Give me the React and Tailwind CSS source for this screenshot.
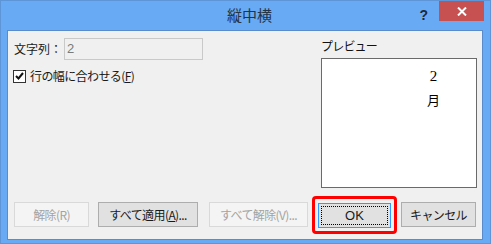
import React from 'react';

const jp = { fontFamily: '"Noto Sans CJK JP", "Noto Sans", sans-serif' };

function Btn({ children, disabled, className = '' }) {
  return (
    <button
      disabled={disabled}
      className={`h-[25px] border text-[12px] leading-none tracking-[-0.6px] flex items-center justify-center ${
        disabled
          ? 'bg-[#f4f4f4] border-[#d9d9d9] text-[#a3a3a3]'
          : 'bg-[#e1e1e1] border-[#adadad] text-[#1a1a1a]'
      } ${className}`}
    >
      {children}
    </button>
  );
}

export default function App() {
  return (
    <div className="w-[491px] h-[244px] bg-[#69aaf4] border border-[#5d95d6] flex flex-col" style={jp}>
      {/* Title bar */}
      <div className="h-[29px] flex items-start relative">
        <div className="flex-1 h-[29px] flex items-center justify-center text-[15px] text-[#233447] pl-[8px]">
          縦中横
        </div>
        <div className="absolute right-[62px] top-[4px] text-[14px] font-bold text-[#1e2a38]" style={{ fontFamily: '"Liberation Sans", sans-serif' }}>
          ?
        </div>
        <div className="absolute right-[6px] top-0 w-[45px] h-[20px] bg-[#c75050] flex items-center justify-center">
          <svg width="10" height="9" viewBox="0 0 10 9">
            <path d="M1 0.5 L9 8.5 M9 0.5 L1 8.5" stroke="#fff" strokeWidth="2" />
          </svg>
        </div>
      </div>

      {/* Client area */}
      <div className="ml-[6px] mr-[7px] mb-[4px] flex-1 bg-[#f0f0f0] border border-[#5a8ccb] flex flex-col">
        <div className="flex flex-1">
          {/* Left */}
          <div className="flex-1 pl-[6px] pt-[7px]">
            <div className="flex items-center h-[22px]">
              <span className="text-[12px] text-[#1a1a1a] w-[50px]">文字列：</span>
              <div className="w-[139px] h-[22px] border border-[#c9c9c9] bg-[#f0f0f0] flex items-center pl-[2px] text-[13px] text-[#7a7a7a]" style={{ fontFamily: '"Liberation Sans", sans-serif' }}>
                2
              </div>
            </div>
            <div className="flex items-center mt-[7px] -ml-[1px]">
              <div className="w-[13px] h-[13px] border border-[#333] bg-white flex items-center justify-center">
                <svg width="9" height="8" viewBox="0 0 9 8">
                  <path d="M1 4 L3.5 6.5 L8 1" stroke="#111" strokeWidth="2" fill="none" />
                </svg>
              </div>
              <span className="ml-[4px] text-[12px] tracking-[-0.6px] text-[#1a1a1a]">
                行の幅に合わせる(<u>F</u>)
              </span>
            </div>
          </div>

          {/* Preview */}
          <div className="w-[156px] mr-[5px] pt-[8px] flex flex-col">
            <span className="text-[12px] tracking-[-0.8px] text-[#111] h-[19px] leading-[14px]">プレビュー</span>
            <div className="w-[156px] h-[130px] border border-[#6a6a6a] bg-white relative">
              <div className="absolute left-[105px] top-[6px] flex flex-col items-center text-[13px] text-black">
                <span className="text-[15px]" style={{ fontFamily: '"Liberation Serif", serif' }}>2</span>
                <span className="mt-[2px]">月</span>
              </div>
            </div>
          </div>
        </div>

        {/* Buttons */}
        <div className="flex items-center pl-[6px] pb-[11px] pt-[13px]">
          <Btn disabled className="w-[75px]">解除(R)</Btn>
          <Btn className="w-[100px] ml-[9px]">
            すべて適用(<u>A</u>)...
          </Btn>
          <Btn disabled className="w-[99px] ml-[11px]">すべて解除(V)...</Btn>
          <div className="relative ml-[10px]">
            <button className="w-[73px] h-[25px] bg-[#e1e1e1] border border-[#3399ff] p-[2px] text-[13px] text-[#1a1a1a]" style={{ fontFamily: '"Liberation Sans", sans-serif' }}>
              <span className="w-full h-full border border-dotted border-black flex items-center justify-center">OK</span>
            </button>
            <div className="absolute -left-[6px] -right-[6px] -top-[5px] -bottom-[6px] border-[3px] border-[#ff0000] rounded-[4px]" />
          </div>
          <Btn className="w-[75px] ml-[10px]">キャンセル</Btn>
        </div>
      </div>
    </div>
  );
}
